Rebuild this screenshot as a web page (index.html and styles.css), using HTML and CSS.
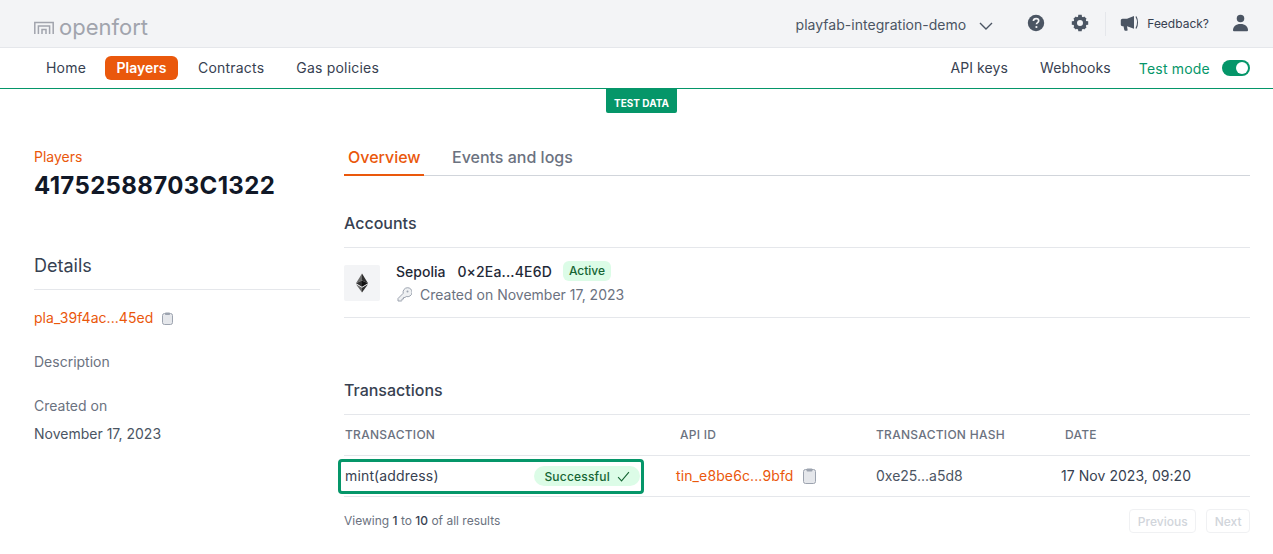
FILE: index.html
```html
<!DOCTYPE html>
<html lang="en">
<head>
  <meta charset="UTF-8" />
  <title>Players - openfort</title>
  <link rel="stylesheet" href="styles.css">
</head>
<body>

  <header class="topbar">
    <a class="logo" href="#">
      <svg width="20" height="13" viewBox="0 0 20 13" fill="none" stroke="#a1a4ad" stroke-width="1.5">
        <path d="M.8 13V1.500h18.400V13"/>
        <path d="M4.400 13V5h11.200v8"/>
        <path d="M8 13V8.500h4V13"/>
      </svg>
      <span>openfort</span>
    </a>
    <div class="topbar-right">
      <span class="project">playfab-integration-demo</span>
      <svg class="chevron" width="14" height="8" viewBox="0 0 14 8" fill="none" stroke="#4b5563" stroke-width="1.4"><path d="M1 1l6 6 6-6"/></svg>
      <svg class="help-icon" width="18" height="18" viewBox="0 0 18 18">
        <circle cx="9" cy="9" r="8.200" fill="#4b5563"/>
        <path d="M6.400 7c.1-1.500 1.200-2.300 2.700-2.300 1.500 0 2.600.9 2.600 2.100 0 1-.5 1.500-1.400 2.100-.6.4-.8.7-.8 1.400" fill="none" stroke="#f3f4f6" stroke-width="1.700"/>
        <circle cx="9.400" cy="13" r="1.100" fill="#f3f4f6"/>
      </svg>
      <svg class="gear-icon" width="18" height="18" viewBox="0 0 18 18">
        <circle cx="9" cy="9" r="4.800" fill="none" stroke="#4b5563" stroke-width="3.600"/>
        <path d="M7.300.8h3.400l.4 3H6.900zM7.300 17.200h3.400l.4-3H6.900zM.8 7.300v3.400l3 .4V6.900zM17.200 7.300v3.400l-3 .4V6.900zM2.400 4.800l2.400-2.400 2.400 1.900-2.900 2.900zM15.600 13.200l-2.400 2.400-2.400-1.900 2.900-2.900zM13.200 2.400l2.400 2.400-1.900 2.400-2.900-2.900zM4.800 15.600l-2.400-2.400 1.900-2.400 2.900 2.900z" fill="#4b5563"/>
      </svg>
      <span class="divider"></span>
      <svg class="horn-icon" width="19" height="16" viewBox="0 0 19 16">
        <path d="M.8 5.500c0-1 .7-1.700 1.700-1.700H7L14 1v12.800L7 11.200l.6 3.600c.1.600-.3 1-.8 1H5.200c-.4 0-.8-.3-.9-.7l-.8-3.900H2.500c-1 0-1.700-.7-1.700-1.700z" fill="#4b5563"/>
        <path d="M16 1.500c1.900 3.400 1.900 8.600 0 12" fill="none" stroke="#4b5563" stroke-width="1.200"/>
      </svg>
      <span class="feedback">Feedback?</span>
      <svg class="user-icon" width="15" height="18" viewBox="0 0 16 18" fill="#4b5563">
        <circle cx="8" cy="4.300" r="4"/>
        <path d="M1 17.800c-.6 0-1-.4-1-1 0-4 3-6.800 8-6.800s8 2.800 8 6.800c0 .6-.4 1-1 1z"/>
      </svg>
    </div>
  </header>

  <nav class="navbar">
    <div class="nav-links">
      <a href="#">Home</a>
      <a class="active" href="#">Players</a>
      <a href="#">Contracts</a>
      <a href="#">Gas policies</a>
    </div>
    <div class="nav-links nav-right">
      <a href="#">API keys</a>
      <a href="#">Webhooks</a>
      <span class="test-mode">Test mode</span>
      <span class="toggle"><span class="knob"></span></span>
    </div>
  </nav>

  <div class="test-row"><span class="test-tag">TEST DATA</span></div>

  <main class="page">
    <aside class="sidebar">
      <a class="crumb" href="#">Players</a>
      <h1>41752588703C1322</h1>
      <h2>Details</h2>
      <div class="side-id">
        <a href="#">pla_39f4ac...45ed</a>
        <svg width="11" height="13" viewBox="0 0 11 13" fill="#e5e7eb" stroke="#9ca3af"><rect x=".5" y="1.500" width="10" height="11" rx="2"/><rect x="3" y=".5" width="5" height="2.500" rx=".8" fill="#9ca3af" stroke="none"/></svg>
      </div>
      <p class="side-label">Description</p>
      <p class="side-label created">Created on</p>
      <p class="side-value">November 17, 2023</p>
    </aside>

    <section class="content">
      <div class="tabs">
        <a class="tab active" href="#">Overview</a>
        <a class="tab" href="#">Events and logs</a>
      </div>

      <h3 class="accounts-title">Accounts</h3>
      <div class="account">
        <span class="chain-icon">
          <svg width="12" height="20" viewBox="0 0 14 22">
            <path d="M7 0L0 11.200 7 8z" fill="#6b6b6b"/>
            <path d="M7 0l7 11.200L7 8z" fill="#2f2f2f"/>
            <path d="M0 11.200L7 8v7.300z" fill="#2f2f2f"/>
            <path d="M14 11.200L7 8v7.300z" fill="#111"/>
            <path d="M0 12.600L7 22v-5.400z" fill="#6b6b6b"/>
            <path d="M14 12.600L7 22v-5.400z" fill="#2f2f2f"/>
          </svg>
        </span>
        <div class="account-info">
          <div class="account-top">
            <span class="chain">Sepolia</span>
            <span class="address">0×2Ea...4E6D</span>
            <span class="badge">Active</span>
          </div>
          <div class="account-created">
            <svg width="15" height="15" viewBox="0 0 15 15" fill="#eef0f2" stroke="#9ca3af" stroke-width="1">
              <path d="M1 14v-2.500l5.200-5.200a4.500 4.500 0 1 1 3 3.200L8 10.500H6.500V12H5v1.500l-.7.5z"/>
              <circle cx="10.500" cy="4.500" r="1" fill="#9ca3af" stroke="none"/>
            </svg>
            <span>Created on November 17, 2023</span>
          </div>
        </div>
      </div>

      <h3 class="tx-title">Transactions</h3>
      <table class="tx-table">
        <thead>
          <tr>
            <th class="col-tx">Transaction</th>
            <th class="col-api">API ID</th>
            <th class="col-hash">Transaction hash</th>
            <th class="col-date">Date</th>
          </tr>
        </thead>
        <tbody>
          <tr>
            <td class="col-tx">
              <div class="tx-focus">
                <span class="tx-name">mint(address)</span>
                <span class="badge-ok">Successful
                  <svg width="13" height="11" viewBox="0 0 12 10" fill="none" stroke="#166534" stroke-width="1"><path d="M1 5.500L4.200 9 11 1"/></svg>
                </span>
              </div>
            </td>
            <td class="col-api">
              <a href="#">tin_e8be6c...9bfd</a>
              <svg width="13" height="16" viewBox="0 0 13 16" fill="#e5e7eb" stroke="#9ca3af"><rect x=".5" y="1.500" width="12" height="14" rx="2"/><rect x="3.500" y=".5" width="6" height="3" rx="1" fill="#9ca3af" stroke="none"/></svg>
            </td>
            <td class="col-hash hash">0xe25...a5d8</td>
            <td class="date">17 Nov 2023, 09:20</td>
          </tr>
        </tbody>
      </table>

      <div class="pager">
        <span class="pager-text">Viewing <b>1</b> to <b>10</b> of all results</span>
        <div class="pager-btns">
          <button disabled>Previous</button>
          <button disabled>Next</button>
        </div>
      </div>
    </section>
  </main>

</body>
</html>
```

FILE: styles.css
```css
* {
  box-sizing: border-box;
}

body {
  margin: 0;
  font-family: 'Inter', sans-serif;
  font-size: 14px;
  background-color: #fff;
  color: #374151;
  overflow: hidden;
}

a {
  text-decoration: none;
  color: inherit;
}

.topbar {
  height: 48px;
  background-color: #f3f4f6;
  border-bottom: 1px solid #e5e7eb;
  display: flex;
  align-items: center;
  justify-content: space-between;
  padding: 0 25px 0 34px;
}

.logo {
  display: flex;
  align-items: center;
  gap: 5px;
  margin-top: 6px;
  font-size: 22px;
  font-weight: 400;
  color: #a1a4ad;
}

.logo svg {
  margin-top: 2px;
}

.topbar-right {
  display: flex;
  align-items: center;
}

.project {
  font-size: 14px;
  color: #4b5563;
  letter-spacing: 0.03px;
  margin-top: 2px;
}

.chevron {
  margin-left: 13px;
  margin-top: 4px;
}

.help-icon {
  margin-left: 34px;
  margin-top: -1px;
}

.gear-icon {
  margin-left: 26px;
  margin-top: -1px;
}

.divider {
  width: 1px;
  height: 24px;
  background-color: #e5e7eb;
  margin-left: 16px;
}

.horn-icon {
  margin-left: 14px;
  margin-top: -1px;
}

.feedback {
  font-size: 12px;
  color: #374151;
  margin-left: 8px;
  margin-top: -1px;
}

.user-icon {
  margin-left: 24px;
  margin-top: -1px;
}

.navbar {
  height: 41px;
  border-bottom: 1px solid #059669;
  display: flex;
  align-items: center;
  justify-content: space-between;
  padding: 0 23px 0 34px;
}

.nav-links {
  display: flex;
  align-items: center;
  gap: 8px;
}

.nav-links a {
  padding: 0 12px;
  height: 24px;
  line-height: 24px;
  border-radius: 6px;
  font-size: 14px;
  font-weight: 400;
  letter-spacing: 0.2px;
  color: #374151;
}

.nav-links a.active {
  background-color: #ea580c;
  color: #fff;
  font-weight: 600;
  letter-spacing: 0;
  padding: 0 11.5px;
  margin-left: -1px;
}

.nav-right a {
  letter-spacing: 0.1px;
}

.test-mode {
  color: #059669;
  font-size: 14px;
  margin-left: 8px;
  letter-spacing: 0.2px;
}

.toggle {
  width: 28px;
  height: 16px;
  border-radius: 8px;
  background-color: #059669;
  margin-left: 4px;
  padding: 2px;
  display: flex;
  justify-content: flex-end;
}

.knob {
  width: 12px;
  height: 12px;
  border-radius: 50%;
  background-color: #fff;
}

.test-row {
  display: flex;
  justify-content: center;
  height: 24px;
}

.test-tag {
  background-color: #059669;
  color: #fff;
  font-size: 10px;
  font-weight: 700;
  height: 24px;
  line-height: 29px;
  padding: 0 8px;
  margin-left: 10px;
  border-radius: 0 0 2px 2px;
}

.page {
  display: flex;
  padding: 30px 23px 0 34px;
}

.sidebar {
  width: 286px;
  margin-right: 24px;
  flex-shrink: 0;
}

.crumb {
  display: block;
  color: #ea580c;
  font-size: 14px;
  line-height: 20px;
  margin-top: 4px;
}

.sidebar h1 {
  margin: 3px 0 0;
  font-size: 24px;
  line-height: 32px;
  font-weight: 700;
  color: #111827;
  letter-spacing: 0.35px;
}

.sidebar h2 {
  margin: 50px 0 0;
  font-size: 18px;
  line-height: 28px;
  font-weight: 400;
  color: #374151;
  padding-bottom: 9px;
  border-bottom: 1px solid #e5e7eb;
}

.side-id {
  display: flex;
  align-items: center;
  gap: 9px;
  margin-top: 18px;
  line-height: 20px;
  letter-spacing: 0.05px;
  color: #ea580c;
}

.side-label {
  margin: 24px 0 0;
  color: #6b7280;
  line-height: 20px;
}

.side-value {
  margin: 8px 0 0;
  color: #4b5563;
  line-height: 20px;
}

.content {
  flex: 1;
  min-width: 0;
}

.tabs {
  display: flex;
  gap: 24px;
  height: 33px;
  border-bottom: 1px solid #d1d5db;
}

.tab {
  padding: 2px 4px 0;
  font-size: 16px;
  line-height: 24px;
  height: 33px;
  color: #6b7280;
  font-weight: 500;
}

.tab.active {
  width: 80px;
  color: #ea580c;
  border-bottom: 2px solid #ea580c;
}

.accounts-title,
.tx-title {
  margin: 0;
  font-size: 16px;
  line-height: 24px;
  font-weight: 500;
  color: #374151;
}

.accounts-title {
  margin-top: 35px;
}

.account {
  margin-top: 12px;
  height: 71px;
  border-top: 1px solid #e5e7eb;
  border-bottom: 1px solid #e5e7eb;
  display: flex;
  align-items: center;
  gap: 16px;
}

.chain-icon {
  width: 36px;
  height: 36px;
  background-color: #f3f4f6;
  border-radius: 2px;
  display: flex;
  align-items: center;
  justify-content: center;
}

.account-info {
  margin-top: 2px;
}

.account-top {
  display: flex;
  align-items: center;
  font-size: 14px;
  color: #1f2937;
}

.chain {
  font-weight: 500;
}

.address {
  margin-left: 12px;
  letter-spacing: 0.15px;
  font-weight: 500;
}

.badge {
  margin-left: 11px;
  background-color: #dcfce7;
  color: #166534;
  font-size: 12px;
  font-weight: 500;
  line-height: 20px;
  padding: 0 6px;
  border-radius: 6px;
  margin-top: -2px;
}

.account-created {
  display: flex;
  align-items: center;
  gap: 8px;
  margin-top: 4px;
  color: #6b7280;
  line-height: 20px;
}

.account-created svg {
  margin-left: 1px;
}

.tx-title {
  margin-top: 60px;
}

.tx-table {
  width: 100%;
  margin-top: 12px;
  border-collapse: collapse;
  border-top: 1px solid #e5e7eb;
}

.tx-table th {
  text-align: left;
  font-size: 12px;
  font-weight: 500;
  letter-spacing: 0.28px;
  text-transform: uppercase;
  color: #6b7280;
  height: 41px;
  padding: 0 0 2px;
}

.tx-table td {
  height: 41px;
  padding: 0 0 2px;
  border-top: 1px solid #e5e7eb;
  border-bottom: 1px solid #e5e7eb;
}

.tx-table td.col-tx {
  padding: 0;
}

.col-tx {
  width: 336px;
}

.col-api {
  width: 195px;
}

.col-hash {
  width: 186px;
}

.tx-table th.col-tx {
  padding-left: 1px;
}

.tx-table th.col-hash,
.tx-table td.col-hash {
  padding-left: 1px;
}

.tx-table th.col-date {
  padding-left: 4px;
}

.tx-focus {
  width: 306px;
  height: 35px;
  margin-left: -6px;
  border: 3px solid #059669;
  border-radius: 4px;
  display: flex;
  align-items: center;
  justify-content: space-between;
  padding: 0 1px 0 4px;
}

.tx-name {
  letter-spacing: 0.15px;
  margin-top: -2px;
}

.badge-ok {
  display: flex;
  align-items: center;
  gap: 7px;
  background-color: #dcfce7;
  color: #166534;
  font-size: 12px;
  font-weight: 500;
  letter-spacing: 0.2px;
  height: 20px;
  padding: 0 10px;
  border-radius: 10px;
}

.col-api a {
  color: #ea580c;
  letter-spacing: 0.12px;
  margin-right: 6px;
  margin-left: -4px;
}

.col-api svg {
  vertical-align: -3px;
}

.hash {
  color: #4b5563;
}

.date {
  color: #374151;
  letter-spacing: 0.05px;
}

.pager {
  display: flex;
  align-items: center;
  justify-content: space-between;
  margin-top: 12px;
  font-size: 12px;
  color: #6b7280;
}

.pager-text {
  margin-top: -2px;
}

.pager b {
  font-weight: 500;
  color: #374151;
}

.pager-btns {
  display: flex;
  gap: 10px;
}

.pager button {
  font-family: inherit;
  font-size: 12px;
  font-weight: 500;
  color: #d1d5db;
  background-color: #fff;
  border: 1px solid #f0f1f3;
  border-radius: 4px;
  height: 24px;
  padding: 0 7.5px;
}
```
